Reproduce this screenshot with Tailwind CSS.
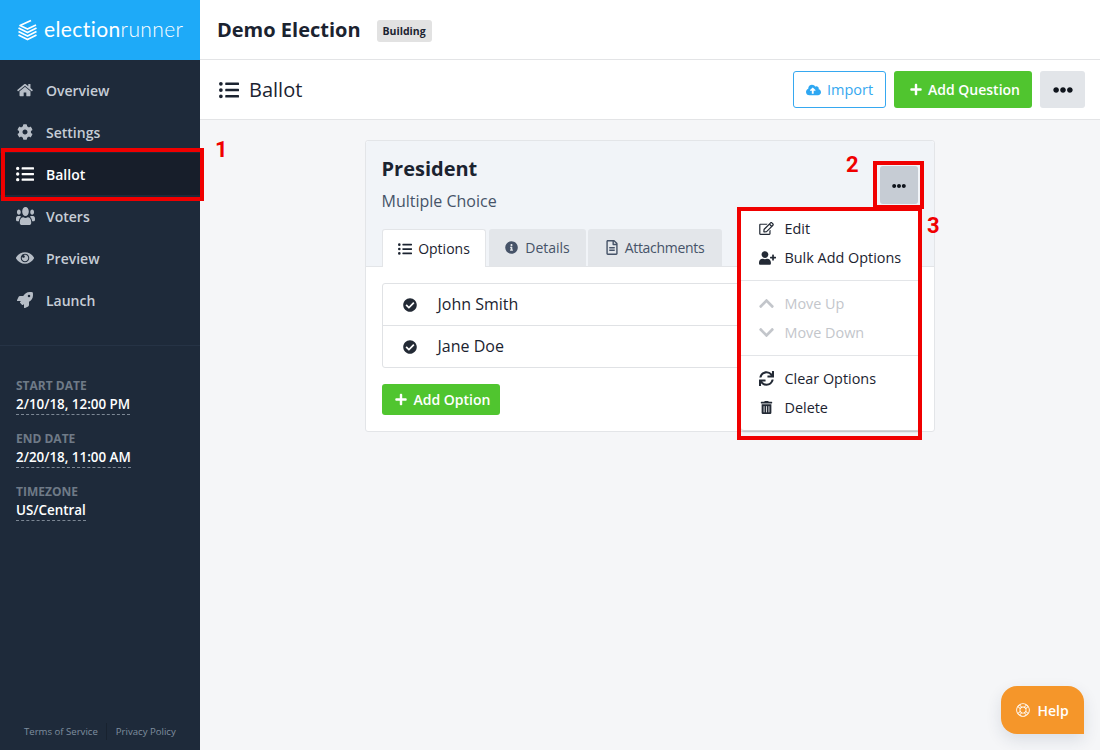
<!DOCTYPE html>
<html lang="en"><head><meta charset="utf-8"><title>Ballot</title>
<script src="https://cdn.jsdelivr.net/npm/@tailwindcss/browser@4"></script>
</head>
<body class="m-0 overflow-hidden bg-[#f5f6f8] font-['Open_Sans',sans-serif]">
<div class="relative flex h-[750px] w-[1100px] overflow-hidden">
  <aside class="flex h-full w-[200px] shrink-0 flex-col bg-[#1e2a3a]">
    <div class="flex h-[60px] items-center gap-[6px] bg-[#1eaaf8] pl-[17px] text-white">
      <svg class="h-[22px] w-[21px] shrink-0" viewBox="0 0 21 22" fill="none" stroke="currentColor" stroke-width="1.8" stroke-linejoin="round"><path d="M14 1.500L3 6.500l7.500 3.500L19 6"/><path d="M1.500 9l9 4.500 9-4.500"/><path d="M1.500 12.500l9 4.500 9-4.500"/><path d="M1.500 16l9 4.500 9-4.500"/></svg>
      <span class="mb-[3px] font-['Lato',sans-serif] text-[21px] leading-none tracking-[0.4px]">election<span class="font-light">runner</span></span>
    </div>
    <nav class="flex flex-col pt-[9px] text-[14px] font-semibold text-[#c6cdd6]">
      <a class="flex h-[42px] items-center pl-[17px]"><svg class="mr-[13px] h-[14px] w-[16px] fill-[#b6bdc6]" viewBox="0 0 576 512"><path d="M488 312.7V456c0 13.3-10.7 24-24 24H348c-6.6 0-12-5.4-12-12V356c0-6.6-5.4-12-12-12h-72c-6.6 0-12 5.4-12 12v112c0 6.6-5.4 12-12 12H112c-13.3 0-24-10.7-24-24V312.700c0-3.600 1.600-7 4.400-9.300l188-154.800c4.400-3.600 10.800-3.600 15.300 0l188 154.800c2.700 2.300 4.300 5.700 4.300 9.300zm83.600-60.900L488 182.900V44.400c0-6.600-5.400-12-12-12h-56c-6.600 0-12 5.400-12 12V117l-89.500-73.700c-17.700-14.600-43.300-14.600-61 0L4.400 251.800c-5.100 4.200-5.800 11.800-1.600 16.900l25.500 31c4.200 5.100 11.800 5.800 16.900 1.600l235.200-193.700c4.400-3.600 10.800-3.600 15.300 0l235.200 193.700c5.100 4.200 12.700 3.500 16.900-1.600l25.500-31c4.200-5.200 3.400-12.700-1.700-16.900z"/></svg>Overview</a>
      <a class="flex h-[42px] items-center pl-[17px]"><svg class="mr-[13px] h-[16px] w-[16px] fill-[#b6bdc6]" viewBox="0 0 512 512"><path d="M444.788 291.100l42.616 24.599c4.867 2.809 7.126 8.618 5.459 13.985-11.070 35.642-29.970 67.842-54.689 94.586a12.016 12.016 0 0 1-14.832 2.254l-42.584-24.595a191.577 191.577 0 0 1-60.759 35.130v49.182a12.010 12.010 0 0 1-9.377 11.718c-34.956 7.850-72.499 8.256-109.219.007-5.490-1.233-9.403-6.096-9.403-11.723v-49.184a191.555 191.555 0 0 1-60.759-35.130l-42.584 24.595a12.016 12.016 0 0 1-14.832-2.254c-24.718-26.744-43.619-58.944-54.689-94.586-1.667-5.366.592-11.175 5.459-13.985L67.212 291.100a193.480 193.480 0 0 1 0-70.199l-42.616-24.599c-4.867-2.809-7.126-8.618-5.459-13.985 11.070-35.642 29.970-67.842 54.689-94.586a12.016 12.016 0 0 1 14.832-2.254l42.584 24.595a191.577 191.577 0 0 1 60.759-35.130V25.759a12.010 12.010 0 0 1 9.377-11.718c34.956-7.850 72.499-8.256 109.219-.007 5.490 1.233 9.403 6.096 9.403 11.723v49.184a191.555 191.555 0 0 1 60.759 35.130l42.584-24.595a12.016 12.016 0 0 1 14.832 2.254c24.718 26.744 43.619 58.944 54.689 94.586 1.667 5.366-.592 11.175-5.459 13.985L444.788 220.900a193.485 193.485 0 0 1 0 70.200zM336 256c0-44.112-35.888-80-80-80s-80 35.888-80 80 35.888 80 80 80 80-35.888 80-80z"/></svg>Settings</a>
      <a class="flex h-[42px] items-center bg-[#171e2a] pl-[16px] text-white"><svg class="mr-[12px] h-[18px] w-[18px] fill-white" viewBox="0 0 512 512"><path d="M48 48a48 48 0 1 0 48 48 48 48 0 0 0-48-48zm0 160a48 48 0 1 0 48 48 48 48 0 0 0-48-48zm0 160a48 48 0 1 0 48 48 48 48 0 0 0-48-48zm448 16H176a16 16 0 0 0-16 16v32a16 16 0 0 0 16 16h320a16 16 0 0 0 16-16v-32a16 16 0 0 0-16-16zm0-320H176a16 16 0 0 0-16 16v32a16 16 0 0 0 16 16h320a16 16 0 0 0 16-16V80a16 16 0 0 0-16-16zm0 160H176a16 16 0 0 0-16 16v32a16 16 0 0 0 16 16h320a16 16 0 0 0 16-16v-32a16 16 0 0 0-16-16z"/></svg>Ballot</a>
      <a class="flex h-[42px] items-center pl-[16px]"><svg class="mr-[11px] h-[18px] w-[19px] fill-[#b6bdc6]" preserveAspectRatio="none" viewBox="0 32 640 448"><path d="M96 224c35.300 0 64-28.700 64-64s-28.700-64-64-64-64 28.700-64 64 28.700 64 64 64zm448 0c35.300 0 64-28.700 64-64s-28.700-64-64-64-64 28.700-64 64 28.700 64 64 64zm32 32h-64c-17.600 0-33.500 7.100-45.100 18.600 40.300 22.100 68.900 62 75.100 109.400h66c17.700 0 32-14.300 32-32v-32c0-35.300-28.700-64-64-64zm-256 0c61.900 0 112-50.100 112-112S381.900 32 320 32 208 82.100 208 144s50.100 112 112 112zm76.800 32h-8.300c-20.800 10-43.900 16-68.500 16s-47.600-6-68.500-16h-8.300C179.600 288 128 339.600 128 403.200V432c0 26.500 21.500 48 48 48h288c26.500 0 48-21.500 48-48v-28.800c0-63.600-51.600-115.200-115.200-115.200zm-223.700-13.400C161.500 263.100 145.600 256 128 256H64c-35.300 0-64 28.700-64 64v32c0 17.700 14.300 32 32 32h65.900c6.300-47.400 34.900-87.300 75.200-109.400z"/></svg>Voters</a>
      <a class="flex h-[42px] items-center pl-[16px]"><svg class="mr-[12px] h-[16px] w-[18px] fill-[#b6bdc6]" viewBox="0 0 576 512"><path d="M569.354 231.631C512.970 135.949 407.810 72 288 72 168.140 72 63.004 135.994 6.646 231.631a47.999 47.999 0 0 0 0 48.739C63.031 376.051 168.190 440 288 440c119.860 0 224.996-63.994 281.354-159.631a47.997 47.997 0 0 0 0-48.738zM288 392c-75.162 0-136-60.827-136-136 0-75.162 60.826-136 136-136 75.162 0 136 60.826 136 136 0 75.162-60.826 136-136 136zm104-136c0 57.438-46.562 104-104 104s-104-46.562-104-104c0-17.708 4.431-34.379 12.236-48.973l-.001.032c0 23.651 19.173 42.823 42.824 42.823s42.824-19.173 42.824-42.823c0-23.651-19.173-42.824-42.824-42.824l-.032.001C253.621 156.431 270.292 152 288 152c57.438 0 104 46.562 104 104z"/></svg>Preview</a>
      <a class="flex h-[42px] items-center pl-[17px]"><svg class="mr-[13px] h-[16px] w-[16px] fill-[#b6bdc6]" viewBox="0 0 512 512"><path d="M505.050 19.100a15.890 15.890 0 0 0-12.200-12.200C460.650 0 435.460 0 410.360 0c-103.200 0-165.100 55.200-211.290 128H94.870A48 48 0 0 0 52 154.490l-49.420 98.800A24 24 0 0 0 24.070 288h103.770l-22.470 22.470a32 32 0 0 0 0 45.250l50.900 50.910a32 32 0 0 0 45.260 0L224 384.160V488a24 24 0 0 0 34.700 21.490l98.700-49.390a47.910 47.910 0 0 0 26.500-42.900V312.790c72.590-46.300 128-108.400 128-211.090.1-25.200.1-50.400-6.850-82.600zM384 168a40 40 0 1 1 40-40 40 40 0 0 1-40 40z"/></svg>Launch</a>
    </nav>
    <div class="mt-[24px] flex flex-col border-t border-[#263345] pl-[16px] pt-[32px]">
      <div class="text-[12px] font-bold uppercase leading-[16px] text-[#6f7a87]">Start Date</div>
      <div class="w-fit border-b border-dashed border-[#7c8794] text-[13.4px] font-semibold leading-[20px] text-white">2/10/18, 12:00 PM</div>
      <div class="mt-[16px] text-[12px] font-bold uppercase leading-[16px] text-[#6f7a87]">End Date</div>
      <div class="w-fit border-b border-dashed border-[#7c8794] text-[13.4px] font-semibold leading-[20px] text-white">2/20/18, 11:00 AM</div>
      <div class="mt-[16px] text-[12px] font-bold uppercase leading-[16px] text-[#6f7a87]">Timezone</div>
      <div class="w-fit border-b border-dashed border-[#7c8794] text-[13.4px] font-semibold leading-[20px] text-white">US/Central</div>
    </div>
    <div class="mt-auto flex h-[27px] items-start pl-[24px] text-[9.6px] leading-[14px] text-[#7f8e9f]">
      <span class="mt-[2px]">Terms of Service</span><span class="ml-[8px] mr-[9px] h-[17px] w-px bg-[#18222f]"></span><span class="mt-[2px]">Privacy Policy</span>
    </div>
  </aside>

  <main class="flex h-full min-w-0 flex-1 flex-col">
    <header class="flex h-[60px] items-center border-b border-[#e3e4e6] bg-white pl-[17px]">
      <h1 class="text-[20px] font-bold leading-none text-[#1b2330]">Demo Election</h1>
      <span class="ml-[16px] mt-[2px] rounded-[3px] bg-[#e2e2e2] px-[6px] py-[3px] text-[10.5px] font-bold leading-[16px] text-[#1b2330]">Building</span>
    </header>
    <div class="flex h-[60px] items-center border-b border-[#e3e4e6] bg-white pl-[19px] pr-[15px]">
      <svg class="mr-[10px] h-[20px] w-[20px] fill-[#1b2330]" viewBox="0 0 512 512"><path d="M48 48a48 48 0 1 0 48 48 48 48 0 0 0-48-48zm0 160a48 48 0 1 0 48 48 48 48 0 0 0-48-48zm0 160a48 48 0 1 0 48 48 48 48 0 0 0-48-48zm448 16H176a16 16 0 0 0-16 16v32a16 16 0 0 0 16 16h320a16 16 0 0 0 16-16v-32a16 16 0 0 0-16-16zm0-320H176a16 16 0 0 0-16 16v32a16 16 0 0 0 16 16h320a16 16 0 0 0 16-16V80a16 16 0 0 0-16-16zm0 160H176a16 16 0 0 0-16 16v32a16 16 0 0 0 16 16h320a16 16 0 0 0 16-16v-32a16 16 0 0 0-16-16z"/></svg>
      <h2 class="text-[20px] leading-none text-[#1b2330]">Ballot</h2>
      <div class="ml-auto flex gap-[8px]">
        <button class="flex h-[37px] w-[93px] items-center justify-center gap-[6px] rounded-[3px] border border-[#36a8f0] bg-white text-[14.5px] text-[#36a8f0]"><svg class="h-[12px] w-[15px] fill-[#2ea7f2]" viewBox="0 0 640 512"><path d="M537.600 226.600c4.100-10.700 6.400-22.400 6.400-34.600 0-53-43-96-96-96-19.700 0-38.100 6-53.300 16.200C367 64.200 315.300 32 256 32c-88.400 0-160 71.600-160 160 0 2.700.1 5.400.2 8.100C40.200 219.800 0 273.200 0 336c0 79.500 64.500 144 144 144h368c70.700 0 128-57.300 128-128 0-61.900-44-113.600-102.400-125.400zM393.400 288H328v112c0 8.800-7.200 16-16 16h-48c-8.800 0-16-7.200-16-16V288h-65.400c-14.300 0-21.400-17.200-11.300-27.300l105.400-105.400c6.200-6.200 16.400-6.200 22.600 0l105.400 105.400c10.100 10.100 2.900 27.300-11.300 27.300z"/></svg>Import</button>
        <button class="flex h-[37px] w-[138px] items-center justify-center gap-[6px] rounded-[3px] bg-[#50c52f] pl-[4px] text-[14px] font-semibold text-white"><svg class="h-[13px] w-[12px] fill-white" viewBox="0 0 448 512"><path d="M416 208H272V64c0-17.670-14.330-32-32-32h-32c-17.670 0-32 14.330-32 32v144H32c-17.670 0-32 14.330-32 32v32c0 17.670 14.330 32 32 32h144v144c0 17.670 14.330 32 32 32h32c17.670 0 32-14.330 32-32V304h144c17.670 0 32-14.330 32-32v-32c0-17.670-14.330-32-32-32z"/></svg>Add Question</button>
        <button class="flex h-[37px] w-[45px] items-center justify-center rounded-[3px] bg-[#e2e5e9]"><svg class="h-[20px] w-[20px] fill-[#10151d]" viewBox="0 0 512 512"><path d="M328 256c0 39.800-32.200 72-72 72s-72-32.200-72-72 32.200-72 72-72 72 32.200 72 72zm104-72c-39.800 0-72 32.200-72 72s32.200 72 72 72 72-32.200 72-72-32.200-72-72-72zm-352 0c-39.800 0-72 32.200-72 72s32.200 72 72 72 72-32.200 72-72-32.200-72-72-72z"/></svg></button>
      </div>
    </div>
    <div class="flex flex-1 justify-center pr-[1px] pt-[20px]">
      <section class="relative h-[292px] w-[570px] rounded-[3px] border border-[#e3e5e8] bg-white">
        <div class="relative h-[126px] rounded-t-[3px] border-b border-[#e3e5e8] bg-[#f1f4f8] px-[16px] pt-[14px]">
          <h3 class="text-[20px] font-bold leading-[27px] text-[#1b2330]">President</h3>
          <p class="mt-[8px] text-[16px] leading-[22px] text-[#465368]">Multiple Choice</p>
          <button class="absolute right-[16px] top-[25px] flex h-[38px] w-[38px] items-center justify-center rounded-[3px] bg-[#c6ccd4] pt-[2px]"><svg class="h-[14px] w-[14px] fill-[#10151d]" viewBox="0 0 512 512"><path d="M328 256c0 39.800-32.200 72-72 72s-72-32.200-72-72 32.200-72 72-72 72 32.200 72 72zm104-72c-39.800 0-72 32.200-72 72s32.200 72 72 72 72-32.200 72-72-32.200-72-72-72zm-352 0c-39.800 0-72 32.200-72 72s32.200 72 72 72 72-32.200 72-72-32.200-72-72-72z"/></svg></button>
          <div class="absolute bottom-[-1px] left-[16px] flex gap-[2px] text-[14px] text-[#465368]">
            <span class="flex h-[38px] w-[104px] items-center justify-center gap-[6px] rounded-t-[3px] border border-b-0 border-[#e3e5e8] bg-white pl-[1px] text-[#1b2330]"><svg class="h-[14px] w-[14px] fill-[#1b2330]" viewBox="0 0 512 512"><path d="M48 48a48 48 0 1 0 48 48 48 48 0 0 0-48-48zm0 160a48 48 0 1 0 48 48 48 48 0 0 0-48-48zm0 160a48 48 0 1 0 48 48 48 48 0 0 0-48-48zm448 16H176a16 16 0 0 0-16 16v32a16 16 0 0 0 16 16h320a16 16 0 0 0 16-16v-32a16 16 0 0 0-16-16zm0-320H176a16 16 0 0 0-16 16v32a16 16 0 0 0 16 16h320a16 16 0 0 0 16-16V80a16 16 0 0 0-16-16zm0 160H176a16 16 0 0 0-16 16v32a16 16 0 0 0 16 16h320a16 16 0 0 0 16-16v-32a16 16 0 0 0-16-16z"/></svg>Options</span>
            <span class="mb-px ml-[1px] flex h-[37px] w-[97px] items-center justify-center gap-[7px] rounded-t-[3px] bg-[#e3e6ea] pl-[1px]"><svg class="h-[13px] w-[13px] fill-[#465368]" viewBox="0 0 512 512"><path d="M256 8C119.043 8 8 119.083 8 256c0 136.997 111.043 248 248 248s248-111.003 248-248C504 119.083 392.957 8 256 8zm0 110c23.196 0 42 18.804 42 42s-18.804 42-42 42-42-18.804-42-42 18.804-42 42-42zm56 254c0 6.627-5.373 12-12 12h-88c-6.627 0-12-5.373-12-12v-24c0-6.627 5.373-12 12-12h12v-64h-12c-6.627 0-12-5.373-12-12v-24c0-6.627 5.373-12 12-12h64c6.627 0 12 5.373 12 12v100h12c6.627 0 12 5.373 12 12v24z"/></svg>Details</span>
            <span class="mb-px flex h-[37px] w-[134px] items-center justify-center gap-[7px] rounded-t-[3px] bg-[#e3e6ea] pl-[1px] tracking-[-0.3px]"><svg class="h-[15px] w-[12px] fill-[#465368]" viewBox="0 0 384 512"><path d="M288 248v28c0 6.600-5.400 12-12 12H108c-6.600 0-12-5.400-12-12v-28c0-6.600 5.400-12 12-12h168c6.600 0 12 5.400 12 12zm-12 72H108c-6.600 0-12 5.400-12 12v28c0 6.600 5.400 12 12 12h168c6.600 0 12-5.400 12-12v-28c0-6.600-5.400-12-12-12zm108-188.100V464c0 26.500-21.500 48-48 48H48c-26.500 0-48-21.500-48-48V48C0 21.500 21.500 0 48 0h204.100C264.800 0 277 5.100 286 14.100L369.900 98c9 8.900 14.100 21.200 14.100 33.900zm-128-80V128h76.100L256 51.900zM336 464V176H232c-13.300 0-24-10.700-24-24V48H48v416h288z"/></svg>Attachments</span>
          </div>
        </div>
        <div class="px-[16px] pt-[16px]">
          <ul class="rounded-[3px] border border-[#e0e2e5] text-[16px] text-[#1b2330]">
            <li class="flex h-[42px] items-center border-b border-[#e0e2e5] pb-[2px] pl-[20px]"><svg class="mr-[21px] mt-[2px] h-[14px] w-[14px] fill-[#232a35]" viewBox="0 0 512 512"><path d="M504 256c0 136.967-111.033 248-248 248S8 392.967 8 256 119.033 8 256 8s248 111.033 248 248zM227.314 387.314l184-184c6.248-6.248 6.248-16.379 0-22.627l-22.627-22.627c-6.248-6.249-16.379-6.249-22.628 0L216 308.118l-70.059-70.059c-6.248-6.248-16.379-6.248-22.628 0l-22.627 22.627c-6.248 6.248-6.248 16.379 0 22.627l104 104c6.249 6.249 16.379 6.249 22.628.001z"/></svg>John Smith</li>
            <li class="flex h-[41px] items-center pb-[2px] pl-[20px]"><svg class="mr-[21px] mt-[2px] h-[14px] w-[14px] fill-[#232a35]" viewBox="0 0 512 512"><path d="M504 256c0 136.967-111.033 248-248 248S8 392.967 8 256 119.033 8 256 8s248 111.033 248 248zM227.314 387.314l184-184c6.248-6.248 6.248-16.379 0-22.627l-22.627-22.627c-6.248-6.249-16.379-6.249-22.628 0L216 308.118l-70.059-70.059c-6.248-6.248-16.379-6.248-22.628 0l-22.627 22.627c-6.248 6.248-6.248 16.379 0 22.627l104 104c6.249 6.249 16.379 6.249 22.628.001z"/></svg>Jane Doe</li>
          </ul>
          <button class="mt-[16px] flex h-[31px] w-[118px] items-center justify-center gap-[7px] rounded-[3px] bg-[#50c52f] pl-[4px] text-[14px] font-semibold text-white"><svg class="h-[13px] w-[12px] fill-white" viewBox="0 0 448 512"><path d="M416 208H272V64c0-17.670-14.330-32-32-32h-32c-17.670 0-32 14.330-32 32v144H32c-17.670 0-32 14.330-32 32v32c0 17.670 14.330 32 32 32h144v144c0 17.670 14.330 32 32 32h32c17.670 0 32-14.330 32-32V304h144c17.670 0 32-14.330 32-32v-32c0-17.670-14.330-32-32-32z"/></svg>Add Option</button>
        </div>
        <div class="absolute left-[375px] top-[68px] flex h-[221px] w-[179px] flex-col rounded-b-[3px] bg-white pt-[5px] text-[14.4px] leading-[29px] text-[#1b2330] shadow-[0_2px_2px_rgba(0,0,0,0.18)]">
          <a class="flex h-[29px] items-center pl-[18px]"><svg class="mr-[11px] h-[13px] w-[15px] fill-[#232a35]" viewBox="0 0 576 512"><path d="M402.300 344.900l32-32c5-5 13.700-1.500 13.700 5.700V464c0 26.500-21.500 48-48 48H48c-26.500 0-48-21.500-48-48V112c0-26.500 21.500-48 48-48h273.500c7.100 0 10.700 8.600 5.700 13.700l-32 32c-1.500 1.500-3.500 2.300-5.700 2.300H48v352h352V350.500c0-2.100.8-4.100 2.300-5.600zm156.600-201.800L296.300 405.700l-90.400 10c-26.200 2.900-48.500-19.200-45.600-45.600l10-90.400L432.900 17.100c22.900-22.900 59.900-22.900 82.700 0l43.200 43.200c22.900 22.900 22.900 60 .1 82.800zM460.100 174L402 115.900 216.200 301.800l-7.300 65.300 65.300-7.300L460.100 174zm64.800-79.700l-43.200-43.200c-4.100-4.100-10.800-4.100-14.800 0L436 82l58.100 58.100 30.900-30.900c4-4.200 4-10.800-.1-14.900z"/></svg>Edit</a>
          <a class="flex h-[29px] items-center pl-[18px]"><svg class="mr-[9px] h-[14px] w-[17px] fill-[#232a35]" viewBox="0 0 640 512"><path d="M624 208h-64v-64c0-8.800-7.200-16-16-16h-32c-8.800 0-16 7.200-16 16v64h-64c-8.800 0-16 7.200-16 16v32c0 8.800 7.200 16 16 16h64v64c0 8.800 7.200 16 16 16h32c8.800 0 16-7.200 16-16v-64h64c8.800 0 16-7.200 16-16v-32c0-8.800-7.200-16-16-16zm-400 48c70.700 0 128-57.300 128-128S294.700 0 224 0 96 57.300 96 128s57.300 128 128 128zm89.600 32h-16.700c-22.200 10.200-46.900 16-72.900 16s-50.600-5.800-72.900-16h-16.700C60.200 288 0 348.200 0 422.400V464c0 26.500 21.500 48 48 48h352c26.500 0 48-21.500 48-48v-41.600c0-74.200-60.200-134.400-134.400-134.400z"/></svg>Bulk Add Options</a>
          <div class="my-[8px] h-px bg-[#e3e5e8]"></div>
          <a class="flex h-[29px] items-center pl-[18px] text-[#c3c6cb]"><svg class="mr-[11px] h-[17px] w-[15px] fill-[#c3c6cb]" viewBox="0 0 448 512"><path d="M240.971 130.524l194.343 194.343c9.373 9.373 9.373 24.569 0 33.941l-22.667 22.667c-9.357 9.357-24.522 9.375-33.901.04L224 227.495 69.255 381.516c-9.379 9.335-24.544 9.317-33.901-.04l-22.667-22.667c-9.373-9.373-9.373-24.569 0-33.941L207.030 130.525c9.372-9.373 24.568-9.373 33.941-.001z"/></svg>Move Up</a>
          <a class="flex h-[29px] items-center pl-[18px] text-[#c3c6cb]"><svg class="mr-[11px] h-[17px] w-[15px] fill-[#c3c6cb]" viewBox="0 0 448 512"><path d="M207.029 381.476L12.686 187.132c-9.373-9.373-9.373-24.569 0-33.941l22.667-22.667c9.357-9.357 24.522-9.375 33.901-.04L224 284.505l154.745-154.021c9.379-9.335 24.544-9.317 33.901.04l22.667 22.667c9.373 9.373 9.373 24.569 0 33.941L240.971 381.476c-9.373 9.372-24.569 9.372-33.942 0z"/></svg>Move Down</a>
          <div class="my-[8px] h-px bg-[#e3e5e8]"></div>
          <a class="flex h-[29px] items-center pl-[18px]"><svg class="mr-[11px] h-[15px] w-[15px] fill-[#232a35]" viewBox="0 0 512 512"><path d="M440.650 12.570l4 82.770A247.160 247.160 0 0 0 255.830 8C134.730 8 33.910 94.920 12.290 209.820A12 12 0 0 0 24.090 224h49.050a12 12 0 0 0 11.670-9.260 175.910 175.910 0 0 1 317-56.940l-101.460-4.860a12 12 0 0 0-12.570 12v47.410a12 12 0 0 0 12 12H500a12 12 0 0 0 12-12V12a12 12 0 0 0-12-12h-47.370a12 12 0 0 0-11.980 12.570zM255.830 432a175.610 175.610 0 0 1-146-77.800l101.800 4.870a12 12 0 0 0 12.570-12v-47.400a12 12 0 0 0-12-12H12a12 12 0 0 0-12 12V500a12 12 0 0 0 12 12h47.350a12 12 0 0 0 12-12.600l-4.150-82.570A247.170 247.170 0 0 0 255.830 504c121.110 0 221.930-86.920 243.550-201.820a12 12 0 0 0-11.800-14.180h-49.050a12 12 0 0 0-11.670 9.260A175.860 175.860 0 0 1 255.830 432z"/></svg>Clear Options</a>
          <a class="flex h-[29px] items-center pl-[18px]"><svg class="mr-[11px] h-[13px] w-[15px] fill-[#232a35]" viewBox="0 0 448 512"><path d="M32 464a48 48 0 0 0 48 48h288a48 48 0 0 0 48-48V128H32zm272-256a16 16 0 0 1 32 0v224a16 16 0 0 1-32 0zm-96 0a16 16 0 0 1 32 0v224a16 16 0 0 1-32 0zm-96 0a16 16 0 0 1 32 0v224a16 16 0 0 1-32 0zM432 32H312l-9.400-18.700A24 24 0 0 0 281.100 0H166.800a23.720 23.720 0 0 0-21.400 13.300L136 32H16A16 16 0 0 0 0 48v32a16 16 0 0 0 16 16h416a16 16 0 0 0 16-16V48a16 16 0 0 0-16-16z"/></svg>Delete</a>
        </div>
      </section>
    </div>
  </main>

  <div class="absolute left-[1px] top-[148px] h-[53px] w-[203px] border-[4px] border-[#f00000]"></div>
  <div class="absolute left-[873px] top-[161px] h-[48px] w-[51px] border-[4px] border-[#f00000]"></div>
  <div class="absolute left-[737px] top-[207px] h-[233px] w-[185px] border-[4px] border-[#f00000]"></div>
  <span class="absolute left-[215px] top-[137px] font-['Roboto',sans-serif] text-[22px] font-bold leading-[26px] text-[#f00000]">1</span>
  <span class="absolute left-[846px] top-[152px] font-['Roboto',sans-serif] text-[22px] font-bold leading-[26px] text-[#f00000]">2</span>
  <span class="absolute left-[927px] top-[213px] font-['Roboto',sans-serif] text-[22px] font-bold leading-[26px] text-[#f00000]">3</span>

  <button class="absolute left-[1001px] top-[686px] flex h-[48px] w-[83px] items-center justify-center gap-[7px] rounded-[16px] rounded-br-none bg-[#f5962a] text-[14px] font-semibold text-white shadow-[0_6px_16px_rgba(30,50,80,0.12)]"><svg class="h-[14px] w-[14px] fill-white" viewBox="0 0 512 512"><path d="M256 8C119.033 8 8 119.033 8 256s111.033 248 248 248 248-111.033 248-248S392.967 8 256 8zm168.766 113.176l-62.885 62.885a128.711 128.711 0 0 0-33.941-33.941l62.885-62.885a217.323 217.323 0 0 1 33.941 33.941zM256 352c-53.019 0-96-42.981-96-96s42.981-96 96-96 96 42.981 96 96-42.981 96-96 96zM363.952 68.853l-66.140 66.140c-26.990-9.325-56.618-9.330-83.624 0l-66.139-66.140c66.716-38.524 149.230-38.499 215.903 0zM121.176 87.234l62.885 62.885a128.711 128.711 0 0 0-33.941 33.941l-62.885-62.885a217.323 217.323 0 0 1 33.941-33.941zm-52.323 60.814l66.139 66.140c-9.325 26.990-9.330 56.618 0 83.624l-66.139 66.140c-38.523-66.715-38.500-149.229 0-215.904zm18.381 242.776l62.885-62.885a128.711 128.711 0 0 0 33.941 33.941l-62.885 62.885a217.366 217.366 0 0 1-33.941-33.941zm60.814 52.323l66.139-66.140c26.990 9.325 56.618 9.330 83.624 0l66.140 66.140c-66.716 38.524-149.230 38.499-215.903 0zm242.776-18.381l-62.885-62.885a128.711 128.711 0 0 0 33.941-33.941l62.885 62.885a217.323 217.323 0 0 1-33.941 33.941zm52.323-60.814l-66.140-66.140c9.325-26.990 9.330-56.618 0-83.624l66.140-66.140c38.523 66.715 38.500 149.229 0 215.904z"/></svg>Help</button>
</div>
</body></html>
